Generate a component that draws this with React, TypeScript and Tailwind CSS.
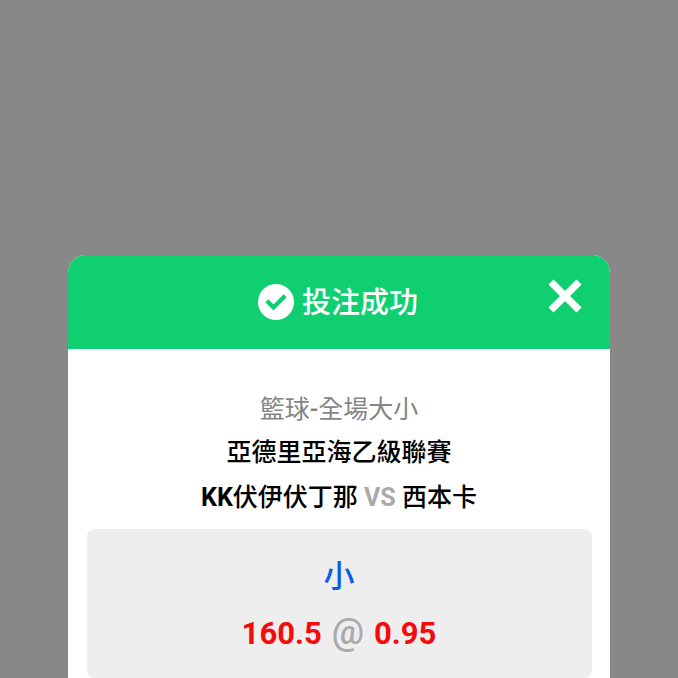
export default function App() {
  return (
    <div className="h-[678px] w-[678px] overflow-hidden bg-[#888888] pt-[255px] font-[Roboto,'Noto_Sans_CJK_TC',sans-serif]">
      <section className="ml-[68px] h-[423px] w-[542px] rounded-t-[18px] bg-white">
        <header className="flex h-[94px] rounded-t-[18px] bg-[#10cf70]">
          <div className="ml-[190px] flex w-[280px] items-center gap-[8px] text-white">
            <svg className="mb-[1px] size-[36px] shrink-0" viewBox="0 0 36 36">
              <circle cx="18" cy="18" r="18" fill="#fff" />
              <path d="M8.8 16.8l6.7 6.7L27.2 11.8" fill="none" stroke="#10cf70" strokeWidth="4.4" />
            </svg>
            <h1 className="pt-[2px] text-[29px] leading-none font-medium whitespace-nowrap">投注成功</h1>
          </div>
          <button className="mt-[24px] ml-[10px] size-[34px]">
            <svg className="size-[34px]" viewBox="0 0 34 34">
              <path d="M3 3l28 28M31 3L3 31" stroke="#fff" strokeWidth="7.2" />
            </svg>
          </button>
        </header>
        <div className="flex flex-col items-center pt-[39px] text-[25px] font-medium whitespace-nowrap text-black">
          <p className="h-[43px] leading-[43px] font-normal text-[#858585]">籃球<span className="font-medium">-</span>全場大小</p>
          <p className="h-[44px] leading-[43px]">亞德里亞海乙級聯賽</p>
          <p className="h-[46px] leading-[46px]"><b>KK</b>伏伊伏丁那 <b className="text-[#aaa]">VS</b> 西本卡</p>
        </div>
        <div className="mx-[18.5px] mt-[8px] flex h-[149px] flex-col items-center rounded-[8px] bg-[#eee] pt-[22px]">
          <p className="h-[52px] text-[31px] leading-[52px] font-medium text-[#0b5ee5]">小</p>
          <p className="flex h-[60px] items-baseline gap-[10px] text-[31px] leading-[58px] font-bold text-[#f50b0b]">
            <span>160.5</span>
            <span className="text-[36px] font-medium text-[#aaa]">@</span>
            <span>0.95</span>
          </p>
        </div>
      </section>
    </div>
  );
}
